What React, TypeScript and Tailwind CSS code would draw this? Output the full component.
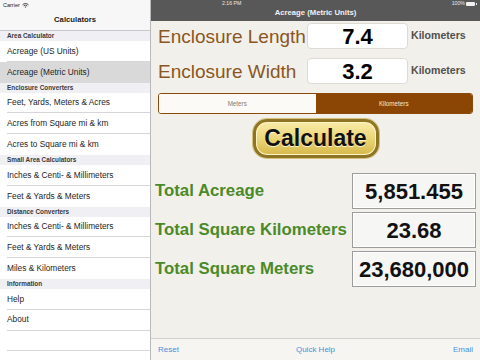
import React from 'react';

const sections = [
  { title: 'Area Calculator', items: ['Acreage (US Units)', 'Acreage (Metric Units)'] },
  {
    title: 'Enclosure Converters',
    items: ['Feet, Yards, Meters & Acres', 'Acres from Square mi & km', 'Acres to Square mi & km'],
  },
  { title: 'Small Area Calculators', items: ['Inches & Centi- & Millimeters', 'Feet & Yards & Meters'] },
  {
    title: 'Distance Converters',
    items: ['Inches & Centi- & Millimeters', 'Feet & Yards & Meters', 'Miles & Kilometers'],
  },
  { title: 'Information', items: ['Help', 'About', ''] },
];

const results = [
  { label: 'Total Acreage', value: '5,851.455' },
  { label: 'Total Square Kilometers', value: '23.68' },
  { label: 'Total Square Meters', value: '23,680,000' },
];

function WifiIcon() {
  return (
    <svg width="7" height="5" viewBox="0 0 14 10" fill="none" stroke="#222" strokeWidth="1.6">
      <path d="M1 3.6 A8.5 8.5 0 0 1 13 3.6" />
      <path d="M3.4 6 A5 5 0 0 1 10.6 6" />
      <path d="M7 9.6 L5.4 8 A2.3 2.3 0 0 1 8.6 8 Z" fill="#222" stroke="none" />
    </svg>
  );
}

function Sidebar() {
  return (
    <div className="w-[151px] shrink-0 h-full flex flex-col bg-white border-r border-[#b9b9bd]">
      {/* nav bar */}
      <div className="h-[31px] shrink-0 bg-[#f7f7f7] border-b border-[#c8c7cc] flex flex-col">
        <div className="h-[10px] flex items-center gap-[2px] pl-[3px] text-[5.5px] text-[#222]">
          <span>Carrier</span>
          <WifiIcon />
        </div>
        <div className="flex-1 flex items-center justify-center text-[7.7px] font-bold text-[#1a1a1a] pb-[1px]">
          Calculators
        </div>
      </div>
      {sections.map(section => (
        <div key={section.title}>
          <div className="h-[10px] bg-[#efeff4] pl-[7px] flex items-center text-[6.4px] font-bold text-[#3a3a3a]">
            {section.title}
          </div>
          {section.items.map((item, i) => {
            const selected = item === 'Acreage (Metric Units)';
            const last = i === section.items.length - 1 && section.title !== 'Information';
            return (
              <div
                key={section.title + i}
                className={`h-[20.8px] pl-[7px] ${selected ? 'bg-[#d9d9d9]' : 'bg-white'}`}
              >
                <div
                  className={`h-full flex items-center text-[8.3px] text-[#1e1e1e] ${
                    last || selected ? '' : 'border-b border-[#d6d6da]'
                  }`}
                >
                  {item}
                </div>
              </div>
            );
          })}
        </div>
      ))}
    </div>
  );
}

function InputRow({ label, value }: { label: string; value: string }) {
  return (
    <div className="h-[26px] flex items-center pl-[7px]">
      <div className="w-[149px] text-[19px] leading-none text-[#8a5722]">{label}</div>
      <div className="w-[101px] h-full bg-white border border-[#dedbd4] rounded-[4px] flex items-center justify-center text-[22px] font-bold text-black">
        {value}
      </div>
      <div className="ml-[3px] text-[10.6px] font-bold text-[#505050]">Kilometers</div>
    </div>
  );
}

export default function App() {
  return (
    <div className="w-[480px] h-[360px] flex overflow-hidden bg-white font-['Liberation_Sans',Arial,sans-serif]">
      <Sidebar />
      <div className="flex-1 h-full flex flex-col bg-[#f2f0eb]">
        {/* top bar */}
        <div className="h-[21px] shrink-0 bg-[#585858] flex flex-col">
          <div className="h-[7px] flex items-center pl-[71px] pr-[3px] text-[5.2px] text-[#e8e8e8]">
            <span>2:16 PM</span>
            <div className="ml-auto flex items-center gap-[1px]">
              <span>100%</span>
              <div className="w-[9px] h-[4px] bg-[#f0f0f0] rounded-[1px]" />
              <div className="w-[1px] h-[2px] bg-[#f0f0f0]" />
            </div>
          </div>
          <div className="flex-1 flex items-start justify-center text-[7.7px] font-bold text-[#f2f2f2]">
            Acreage (Metric Units)
          </div>
        </div>

        <div className="mt-[2px]">
          <InputRow label="Enclosure Length" value="7.4" />
        </div>
        <div className="mt-[9px]">
          <InputRow label="Enclosure Width" value="3.2" />
        </div>

        {/* segmented control */}
        <div className="mt-[9px] mx-[7px] h-[21px] flex border border-[#8b4a0a] rounded-[3px] overflow-hidden text-[6.3px]">
          <div className="flex-1 bg-[#fbfaf7] flex items-center justify-center text-[#8a7b6c]">Meters</div>
          <div className="flex-1 bg-[#8b4606] flex items-center justify-center text-[#f3e6d6]">Kilometers</div>
        </div>

        {/* calculate */}
        <div className="mt-[5px] flex justify-center">
          <button className="w-[126px] h-[39px] rounded-[14px] border-[3px] border-[#8e7526] bg-linear-to-b from-[#f8eca8] via-[#ecd677] to-[#d6b84a] shadow-[0_0_0_1px_#d4c07a,inset_0_0_0_1px_#fff4c4] flex items-center justify-center text-[23px] font-bold text-[#111] [text-shadow:0_1px_0_#fff7d0]">
            Calculate
          </button>
        </div>

        {/* results */}
        <div className="mt-[15px] flex flex-col gap-[3px]">
          {results.map(r => (
            <div key={r.label} className="h-[36px] flex items-center pl-[4px] pr-[4px]">
              <div className="flex-1 text-[16.8px] font-bold text-[#4a8a29]">{r.label}</div>
              <div className="w-[124px] h-full border border-[#9c9c9c] bg-[#f6f6f4] shadow-[inset_0_0_0_1px_#ffffff] flex items-center justify-center text-[22px] font-bold text-[#111]">
                {r.value}
              </div>
            </div>
          ))}
        </div>

        <div className="flex-1" />

        {/* toolbar */}
        <div className="h-[22px] shrink-0 border-t border-[#d2d0cc] bg-[#f6f5f2] grid grid-cols-3 items-center px-[7px] text-[8px] text-[#4a8fe0]">
          <span>Reset</span>
          <span className="text-center">Quick Help</span>
          <span className="text-right">Email</span>
        </div>
      </div>
    </div>
  );
}
